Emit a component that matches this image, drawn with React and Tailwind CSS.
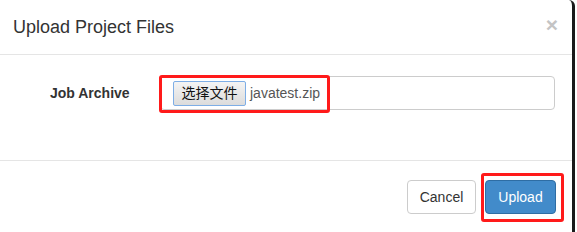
import React from 'react'

function Highlight({ className }) {
  return (
    <div
      className={`pointer-events-none absolute rounded-[3px] border-[3px] border-[#ff1a1a] ${className}`}
    />
  )
}

export default function App() {
  return (
    <div
      className="relative h-[232px] w-[577px] overflow-hidden bg-white text-[#333]"
      style={{ fontFamily: '"Liberation Sans", Arial, "Noto Sans CJK SC", sans-serif' }}
    >
      <div className="flex h-full w-[575px] flex-col rounded-tr-[6px] border-r-[3px] border-[#1a1a1a]">
        {/* Header */}
        <div className="flex h-[55px] items-center justify-between border-b border-[#e5e5e5] pl-[13px] pr-[14px]">
          <h4 className="text-[18px] leading-[26px]">Upload Project Files</h4>
          <button className="-mt-[6px] text-[21px] font-bold leading-none text-[#c4c4c4]">×</button>
        </div>

        {/* Body */}
        <div className="relative flex h-[105px] items-start pt-[21px]">
          <label className="w-[160px] pl-[50px] pt-[7px] text-[14px] font-bold leading-[20px]">
            Job Archive
          </label>
          <div className="flex h-[34px] w-[395px] items-center rounded-[4px] border border-[#ccc] pl-[12px]">
            <button className="flex h-[25px] w-[73px] items-center justify-center rounded-[2px] border border-[#7eaee6] bg-gradient-to-b from-[#f4f4f4] to-[#dcdcdc] text-[14px] leading-none text-[#111]">
              选择文件
            </button>
            <span className="ml-[4px] text-[14px] text-[#555]">javatest.zip</span>
          </div>
          <Highlight className="left-[159px] top-[20px] h-[38px] w-[171px]" />
        </div>

        {/* Footer */}
        <div className="relative flex flex-1 items-start justify-end gap-[9px] border-t border-[#e5e5e5] pr-[16px] pt-[19px]">
          <button className="h-[34px] w-[69px] rounded-[4px] border border-[#ccc] bg-white text-[14px] text-[#333]">
            Cancel
          </button>
          <button className="h-[34px] w-[71px] rounded-[4px] border border-[#2e6da4] bg-[#428bca] text-[14px] text-white">
            Upload
          </button>
          <Highlight className="left-[481px] top-[12px] h-[49px] w-[83px]" />
        </div>
      </div>
    </div>
  )
}
